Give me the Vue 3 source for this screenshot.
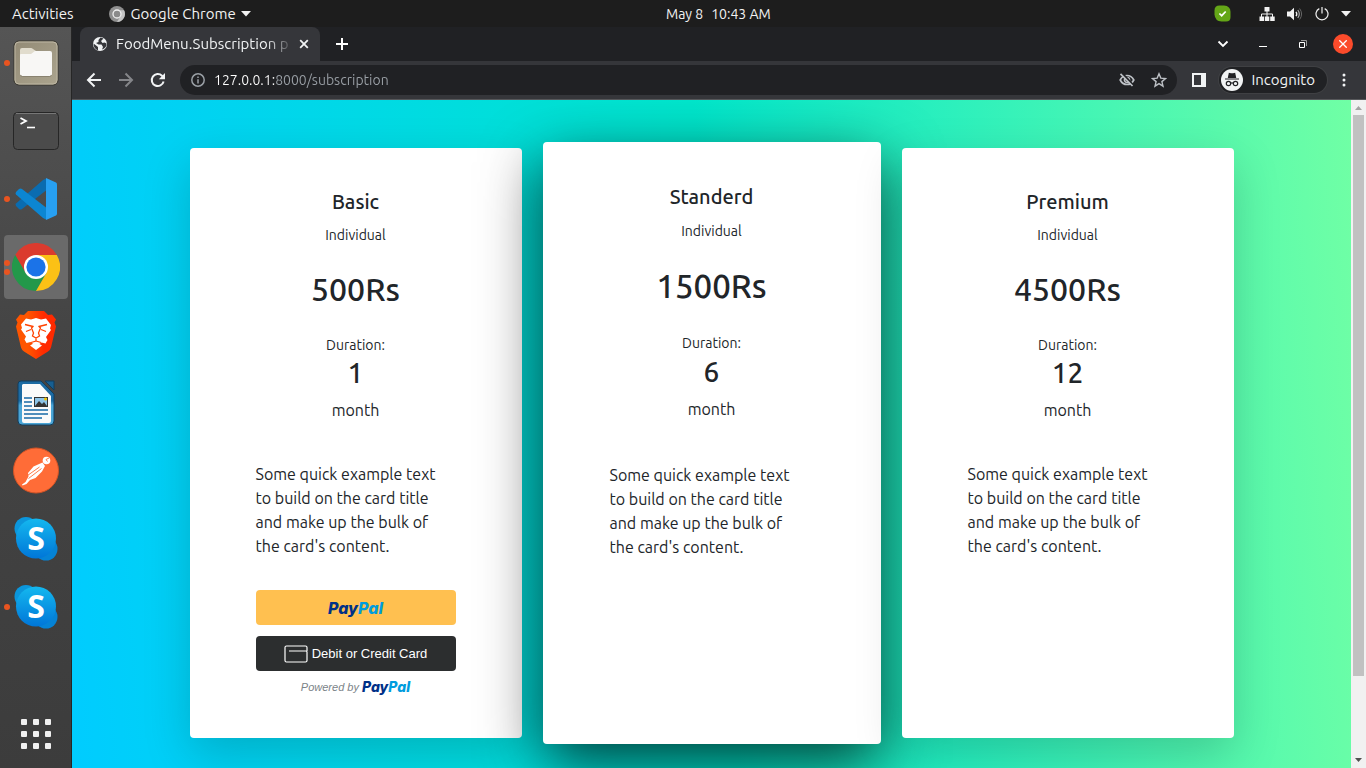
<script setup>
import { ref } from 'vue'

const address = ref('127.0.0.1:8000/subscription')

const plans = [
  { name: 'Basic', price: '500Rs', months: 1, featured: false, pay: true },
  { name: 'Standerd', price: '1500Rs', months: 6, featured: true, pay: false },
  { name: 'Premium', price: '4500Rs', months: 12, featured: false, pay: false }
]

const dock = [
  { id: 'files', label: 'Files', dots: 1 },
  { id: 'terminal', label: 'Terminal', dots: 0 },
  { id: 'code', label: 'Visual Studio Code', dots: 1 },
  { id: 'chrome', label: 'Google Chrome', dots: 2 },
  { id: 'brave', label: 'Brave', dots: 0 },
  { id: 'writer', label: 'LibreOffice Writer', dots: 0 },
  { id: 'postman', label: 'Postman', dots: 0 },
  { id: 'skype', label: 'Skype', dots: 0 },
  { id: 'skype', label: 'Skype', dots: 1 }
]
</script>

<template>
  <div class="desktop">
    <header class="topbar">
      <button class="top-btn activities">Activities</button>
      <button class="top-btn app-menu">
        <svg width="16" height="16" viewBox="0 0 16 16">
          <circle cx="8" cy="8" r="8" fill="#8f8f8f" />
          <path d="M8 4.200h7A8 8 0 0 1 8 16l3.600-6z" fill="#c4c4c4" />
          <circle cx="8" cy="8" r="4" fill="#8a8a8a" stroke="#f0f0f0" stroke-width="1.300" />
        </svg>
        <span>Google Chrome</span>
        <svg width="10" height="6" viewBox="0 0 10 6"><path d="M0 0h10L5 5.500z" fill="#f2f2f2" /></svg>
      </button>
      <button class="top-btn clock"><span>May 8</span><span>10:43 AM</span></button>
      <div class="tray">
        <svg width="17" height="17" viewBox="0 0 17 17">
          <path d="M5.500.5h4.500q6.500.5 6.500 6.500v5q0 4.500-4.500 4.500H7.500Q1 16 .5 9.500v-4q0-5 5-5z" fill="#64a617" />
          <path d="M5.400 8.500l2.300 2.200 4-4.200" fill="none" stroke="#fff" stroke-width="1.700" />
        </svg>
        <svg class="net" width="16" height="14" viewBox="0 0 16 14">
          <path d="M5.500 0h5v4.500h-5zM0.500 9.500h4.500V14H0.500zM5.800 9.500h4.500V14H5.800zM11.200 9.500h4.500V14h-4.500z" fill="#f2f2f2" />
          <path d="M8 4v6M2.500 10V7h11v3" fill="none" stroke="#f2f2f2" />
        </svg>
        <svg width="16" height="14" viewBox="0 0 16 14">
          <path d="M0 4.500h3L7 .8v12.400L3 9.500H0z" fill="#f2f2f2" />
          <path d="M9 4.800q1.600 2.200 0 4.400" fill="none" stroke="#f2f2f2" stroke-width="1.300" />
          <path d="M10.800 3q3 4 0 8" fill="none" stroke="#aaa" stroke-width="1.200" />
          <path d="M12.600 1.500q4 5.500 0 11" fill="none" stroke="#666" />
        </svg>
        <svg width="14" height="14" viewBox="0 0 14 14" fill="none" stroke="#f2f2f2" stroke-width="1.200">
          <path d="M4.300 1.600a6 6 0 1 0 5.400 0M7 0v6.500" />
        </svg>
        <svg width="10" height="6" viewBox="0 0 10 6"><path d="M0 0h10L5 5.500z" fill="#f2f2f2" /></svg>
      </div>
    </header>

    <div class="workspace">
      <nav class="dock" aria-label="Dock">
        <button
          v-for="(app, i) in dock"
          :key="i"
          class="dock-item"
          :class="{ active: app.id === 'chrome' }"
          :aria-label="app.label"
        >
          <span class="dots"><i v-for="n in app.dots" :key="n"></i></span>

          <svg v-if="app.id === 'files'" width="48" height="48" viewBox="0 0 48 48">
            <defs>
              <linearGradient id="filesBg" x1="0" y1="0" x2="1" y2="1">
                <stop offset="0" stop-color="#938b76" /><stop offset="1" stop-color="#aba48e" />
              </linearGradient>
            </defs>
            <rect x="2" y="2" width="44" height="44" rx="5" fill="url(#filesBg)" stroke="#38362f" />
            <rect x="3" y="3" width="42" height="42" rx="4" fill="none" stroke="#bdb6a3" />
            <path d="M8 14v-3q0-2 2-2h9q1 0 2 1l3 2v5H8z" fill="#e1dccd" />
            <path d="M8 16q0-1 1-1h10l4-3h15q2 0 2 2v21q0 2-2 2H10q-2 0-2-2z" fill="#f8f7f5" />
            <path d="M8.500 36q.5 1.500 2 1.500h27q1.500 0 2-1.500" fill="none" stroke="#89826f" />
          </svg>

          <svg v-else-if="app.id === 'terminal'" width="48" height="48" viewBox="0 0 48 48">
            <rect x="1.500" y="5.500" width="45" height="37" rx="4" fill="#4b4b4b" stroke="#262626" />
            <path d="M4 6.500h40" stroke="#777" />
            <path d="M8.500 11l5.500 3-5.500 3" fill="none" stroke="#fff" stroke-width="1.800" />
            <path d="M15 20.500h8" stroke="#fff" stroke-width="1.600" />
          </svg>

          <svg v-else-if="app.id === 'code'" width="48" height="48" viewBox="0 0 48 48">
            <path d="M34 3.500v12L10 34q-1.500 1-3 0l-3-3q-1-1.500 0-2.500L31 5z" fill="#0a6cb0" />
            <path d="M34 44.500v-12L10 14q-1.500-1-3 0l-3 3q-1 1.500 0 2.500L31 43z" fill="#0c86d2" />
            <path d="M34 3l10 4.500q1 .5 1 2v29q0 1.500-1 2L34 45z" fill="#27a0f2" />
          </svg>

          <svg v-else-if="app.id === 'chrome'" width="48" height="48" viewBox="0 0 48 48">
            <path d="M24 12H44.800A24 24 0 0 0 3.200 12L13.600 30z" fill="#db3b2e" />
            <path d="M13.600 30L3.200 12A24 24 0 0 0 24 48L34.400 30z" fill="#23984a" />
            <path d="M34.400 30L24 48A24 24 0 0 0 44.800 12H24z" fill="#fbc116" />
            <circle cx="24" cy="24" r="12" fill="#fff" />
            <circle cx="24" cy="24" r="9.600" fill="#1b73e8" />
          </svg>

          <svg v-else-if="app.id === 'brave'" width="48" height="48" viewBox="0 0 48 48">
            <defs>
              <linearGradient id="braveBg"><stop offset=".3" stop-color="#ff5500" /><stop offset=".7" stop-color="#ff2a00" /></linearGradient>
            </defs>
            <path d="M16 0h16l4 4 4-.5 4 5-1.500 3 1.500 4-5 21q-.5 2-3 4L24 48l-12-7.500q-2.500-2-3-4L4 15.500l1.500-4L4 8.500l4-5 4 .5z" fill="url(#braveBg)" />
            <path d="M14 7.500l5 1 5-1.500 5 1.500 5-1 5 6.500-1 3.500 1 1.500-5 7 1.500 3-2 3.500-4-1-3.500 2.500L24 34l-2-.5-3.500-2.500-4 1-2-3.500L14 25.500l-5-7 1-1.500-1-3.500z" fill="#fff" />
            <path d="M24 31l6 3.500-6 4.500-6-4.500z" fill="#fff" />
            <path d="M13 13.500l8 2M35 13.500l-8 2M21.500 15l-2 2 2 5-1 3 3.500 2 3.500-2-1-3 2-5-2-2M14 20.500l5-2M34 20.500l-5-2M24 27v3l-5 1.500M24 30l5 1.500" fill="none" stroke="#ff4200" stroke-width="1.300" />
          </svg>

          <svg v-else-if="app.id === 'writer'" width="48" height="48" viewBox="0 0 48 48">
            <defs>
              <linearGradient id="writerBg" x1="0" y1="0" x2="0" y2="1"><stop offset=".45" stop-color="#1c6ba3" /><stop offset=".55" stop-color="#4aa5d6" /></linearGradient>
            </defs>
            <path d="M9 2h20l13 13v27q0 4-4 4H10q-4 0-4-4V5q0-3 3-3z" fill="url(#writerBg)" stroke="#123d5c" />
            <path d="M33 2h9v9z" fill="#175f92" stroke="#123d5c" />
            <path d="M11 5h17l11 12v25q0 2-2 2H12q-2 0-2-2V6z" fill="#fafafa" />
            <path d="M12 19h8M12 23h8M12 27h8M12 31h24M12 35h24M12 39h18" stroke="#176aa6" stroke-width="1.700" />
            <rect x="22.500" y="18.500" width="13" height="9" fill="#8cc4e8" stroke="#333" />
            <path d="M23 27l4-5 3 3 2-2 3 4z" fill="#343434" /><circle cx="33.500" cy="20" r="1.500" fill="#f3c300" />
          </svg>

          <svg v-else-if="app.id === 'postman'" width="48" height="48" viewBox="0 0 48 48">
            <circle cx="24" cy="23.500" r="22.500" fill="#ff6c37" stroke="#d45325" />
            <circle cx="34.500" cy="13.500" r="3.800" fill="#fff" />
            <path d="M30.500 15.500l2.500 3.500-3 5.500-6.500 6.500-5.500 2-3.500 4-4 1.500-.5-1 3.500-2.500 3-5.500-.5-3.500 5.500-6.500z" fill="#fff" />
            <path d="M15.500 28.500l12-8.500M16.500 31.500l13-10M34 12.500l3-1.500M34 12.500l1.500 2" stroke="#ff6c37" stroke-width=".9" fill="none" />
          </svg>

          <svg v-else width="48" height="48" viewBox="0 0 48 48">
            <defs>
              <linearGradient id="skypeBg" x1="0" y1="0" x2="0" y2="1"><stop offset="0" stop-color="#14b8ef" /><stop offset="1" stop-color="#0076d8" /></linearGradient>
            </defs>
            <circle cx="14" cy="13.500" r="11.500" fill="#0b96dc" />
            <circle cx="34" cy="34" r="11.500" fill="#0583d6" />
            <circle cx="24" cy="23.500" r="20" fill="url(#skypeBg)" />
            <text x="24" y="35" text-anchor="middle" class="skype-s">S</text>
          </svg>
        </button>

        <button class="apps" aria-label="Show Applications"><i v-for="n in 9" :key="n"></i></button>
      </nav>

      <div class="browser">
        <div class="tabs">
          <div class="tab">
            <svg width="16" height="16" viewBox="0 0 16 16">
              <circle cx="8" cy="8" r="7" fill="#f1f3f4" />
              <path d="M8.500 1.500L6.500 4v2L4 7l2.500 1.500h3L11 11l-1 2.500q5-2 4.500-6l-2-1-2 .5L9 5l2.500-2.500zM1.500 7.500L6 11v3.500Q1.500 12.500 1.500 7.500z" fill="#35363a" />
            </svg>
            <span class="tab-title">FoodMenu.Subscription p</span>
            <button class="icon-btn" aria-label="Close tab">
              <svg width="10" height="10" viewBox="0 0 10 10" stroke="#f1f3f4" stroke-width="1.800"><path d="M1.200 1.200l7.600 7.600M8.800 1.200L1.200 8.800" /></svg>
            </button>
          </div>
          <button class="icon-btn new-tab" aria-label="New tab">
            <svg width="12" height="12" viewBox="0 0 12 12" stroke="#fff" stroke-width="2"><path d="M6 0v12M0 6h12" /></svg>
          </button>
          <div class="window-controls">
            <button class="icon-btn" aria-label="Search tabs">
              <svg width="12" height="8" viewBox="0 0 12 8" fill="none" stroke="#fff" stroke-width="1.800"><path d="M1.500 1.500L6 6l4.500-4.500" /></svg>
            </button>
            <button class="icon-btn" aria-label="Minimize">
              <svg width="8" height="8" viewBox="0 0 8 8"><path d="M0 6.500h8" stroke="#fff" /></svg>
            </button>
            <button class="icon-btn" aria-label="Restore">
              <svg width="8" height="8" viewBox="0 0 8 8" fill="none"><path d="M2 .5h5.500V6" stroke="#999" /><path d="M.5 2.500h5v5h-5z" stroke="#fff" /></svg>
            </button>
            <button class="icon-btn close" aria-label="Close window">
              <svg width="8" height="8" viewBox="0 0 8 8" stroke="#fff" stroke-width="1.300"><path d="M.3.3l7.400 7.400M7.700.3L.3 7.700" /></svg>
            </button>
          </div>
        </div>

        <div class="toolbar">
          <button class="icon-btn" aria-label="Back">
            <svg width="16" height="16" viewBox="0 0 16 16" fill="none" stroke="#f1f3f4" stroke-width="2"><path d="M15 8H2M8.500 1.500L2 8l6.500 6.500" /></svg>
          </button>
          <button class="icon-btn" aria-label="Forward">
            <svg width="16" height="16" viewBox="0 0 16 16" fill="none" stroke="#85868a" stroke-width="2"><path d="M1 8h13M7.500 1.500L14 8l-6.500 6.500" /></svg>
          </button>
          <button class="icon-btn" aria-label="Reload">
            <svg width="16" height="16" viewBox="0 0 16 16"><path d="M13.600 9.500A6 6 0 1 1 12 3.800L14 5.500" fill="none" stroke="#f1f3f4" stroke-width="2" /><path d="M15 1v6.200H8.800z" fill="#f1f3f4" /></svg>
          </button>
          <div class="omnibox">
            <svg width="14" height="14" viewBox="0 0 14 14"><circle cx="7" cy="7" r="6.200" fill="none" stroke="#9aa0a6" stroke-width="1.500" /><path d="M7 6.200V10.500M7 3.500v1.500" stroke="#9aa0a6" stroke-width="1.500" /></svg>
            <input v-model="address" class="address" type="text" aria-label="Address" />
            <button class="icon-btn" aria-label="Third-party cookies blocked">
              <svg width="16" height="14" viewBox="0 0 16 14" fill="none" stroke="#bdc1c6" stroke-width="1.700"><path d="M1.200 7Q3.500 2.500 8 2.500T14.800 7Q12.500 11.500 8 11.500T1.200 7z" /><circle cx="8" cy="7" r="2.500" /><path d="M3 0l12 13" stroke="#202124" stroke-width="2" /><path d="M1.500.8L13.500 13" /></svg>
            </button>
            <button class="icon-btn" aria-label="Bookmark this tab">
              <svg width="16" height="16" viewBox="0 0 16 16" fill="none" stroke="#bdc1c6" stroke-width="1.400"><path d="M8 1.800l1.800 4.300 4.700.4-3.600 3.100 1.100 4.600L8 11.700l-4 2.500 1.100-4.600L1.500 6.500l4.700-.4z" /></svg>
            </button>
          </div>
          <button class="icon-btn side-panel" aria-label="Side panel">
            <svg width="14" height="14" viewBox="0 0 14 14"><path d="M0 0h14v14H0zM2 2v10h7V2z" fill="#f1f3f4" fill-rule="evenodd" /></svg>
          </button>
          <button class="incognito">
            <svg width="22" height="22" viewBox="0 0 22 22">
              <circle cx="11" cy="11" r="11" fill="#f1f3f4" />
              <path d="M7.500 8.500L8.300 4.500l1.500.4h2.400l1.500-.4.800 4zM4 10h14" fill="#202124" stroke="#202124" stroke-width="1.200" />
              <g fill="none" stroke="#202124" stroke-width="1.200"><circle cx="7.500" cy="14.500" r="2.200" /><circle cx="14.500" cy="14.500" r="2.200" /><path d="M9.700 14h2.600" /></g>
            </svg>
            <span>Incognito</span>
          </button>
          <button class="icon-btn" aria-label="Chrome menu">
            <svg width="4" height="14" viewBox="0 0 4 14" fill="#f1f3f4"><circle cx="2" cy="2" r="1.500" /><circle cx="2" cy="7" r="1.500" /><circle cx="2" cy="12" r="1.500" /></svg>
          </button>
        </div>

        <div class="viewport">
          <main class="page">
            <div class="plans">
              <section v-for="plan in plans" :key="plan.name" class="card" :class="{ featured: plan.featured }">
                <h5>{{ plan.name }}</h5>
                <p class="small">Individual</p>
                <h2>{{ plan.price }}</h2>
                <p class="small">Duration:</p>
                <h3>{{ plan.months }}</h3>
                <p class="unit">month</p>
                <p class="text">Some quick example text to build on the card title and make up the bulk of the card's content.</p>
                <div v-if="plan.pay" class="pay">
                  <button class="pay-btn gold" aria-label="PayPal"><span class="paypal"><b>Pay</b><b class="pal">Pal</b></span></button>
                  <button class="pay-btn dark">
                    <svg width="24" height="18" viewBox="0 0 24 18" fill="none" stroke="#fff"><path d="M23 6V2.500Q23 1 21.500 1h-19Q1 1 1 2.500v13Q1 17 2.500 17h19q1.500 0 1.500-1.500V7q0-1-1-1H5" stroke-width="1.200" /></svg>
                    <span>Debit or Credit Card</span>
                  </button>
                  <p class="powered"><span>Powered by</span><span class="paypal mini"><b>Pay</b><b class="pal">Pal</b></span></p>
                </div>
              </section>
            </div>
          </main>
          <div class="scrollbar" aria-hidden="true">
            <svg width="15" height="15" viewBox="0 0 15 15"><path d="M4 10h7L7.500 6z" fill="#a3a3a3" /></svg>
            <div class="track"><div class="thumb"></div></div>
            <svg width="15" height="15" viewBox="0 0 15 15"><path d="M4 5h7L7.500 9z" fill="#505050" /></svg>
          </div>
        </div>
      </div>
    </div>
  </div>
</template>

<style>
body { margin: 0; overflow: hidden; }
</style>

<style scoped>
* { box-sizing: border-box; }
button { border: 0; padding: 0; background: none; color: inherit; font: inherit; cursor: pointer; }
svg { display: block; flex: none; }
h2, h3, h5, p { margin: 0; }

.desktop {
  display: flex; flex-direction: column; height: 100vh; overflow: hidden;
  font-family: Ubuntu, "Noto Sans", "Open Sans", sans-serif; font-size: 15px; color: #212529;
}
.topbar {
  display: grid; grid-template-columns: auto 1fr auto; align-items: center; position: relative;
  height: 27px; flex: none; background: #1d1d1d; color: #f2f2f2;
}
.top-btn { display: flex; align-items: center; }
.activities { padding-left: 12px; }
.app-menu { gap: 6px; margin-left: 35px; justify-self: start; }
.app-menu svg:last-child { margin-left: -1px; }
.clock { position: absolute; left: 50%; top: 0; height: 27px; gap: 8px; margin-left: -17px; font-size: 14px; }
.tray { display: flex; align-items: center; gap: 12px; padding-right: 15px; }
.tray .net { margin-left: 16px; }

.workspace { display: flex; flex: 1; min-height: 0; }
.dock {
  display: flex; flex-direction: column; gap: 4px; width: 72px; flex: none; padding: 4px 4px 2px;
  background: linear-gradient(#555, #454545 40%, #3c3c3c); border-right: 1px solid #262626;
}
.dock-item { position: relative; display: grid; place-items: center; height: 64px; width: 64px; border-radius: 4px; flex: none; }
.dock-item.active { background: #6a6a6a; }
.dots { position: absolute; left: 0; top: 0; bottom: 0; display: flex; flex-direction: column; justify-content: center; gap: 3px; }
.dots i { width: 6px; height: 6px; border-radius: 50%; background: #e95420; }
.skype-s { font: 700 32px "Open Sans", sans-serif; fill: #fff; }
.apps { display: grid; grid-template-columns: repeat(3, 6px); gap: 6px; place-content: center; width: 64px; height: 64px; margin-top: auto; }
.apps i { width: 6px; height: 6px; border-radius: 1px; background: #f0f0f0; }

.browser { display: flex; flex-direction: column; flex: 1; min-width: 0; }
.icon-btn { display: grid; place-items: center; flex: none; }
.tabs { display: flex; align-items: center; height: 34px; padding-left: 8px; background: #202124; color: #f1f3f4; flex: none; }
.tab { display: flex; align-items: center; width: 240px; height: 34px; padding: 0 11px 0 12px; border-radius: 8px 8px 0 0; background: #35363a; }
.tab-title {
  flex: 1; margin: 0 9px 0 8px; padding-bottom: 2px; overflow: hidden; white-space: nowrap;
  mask-image: linear-gradient(to right, #000 150px, transparent 178px);
}
.new-tab { margin-left: 16px; }
.window-controls { display: flex; align-items: center; margin-left: auto; padding-right: 13px; }
.window-controls .icon-btn { width: 20px; height: 20px; margin-left: 20px; }
.window-controls .close { border-radius: 50%; background: #fb4b2b; }

.toolbar { display: flex; align-items: center; gap: 16px; height: 39px; padding: 0 20px 0 14px; background: #35363a; border-bottom: 1px solid #57585b; color: #f1f3f4; flex: none; }
.omnibox { display: flex; align-items: center; flex: 1; height: 30px; margin-left: -2px; padding: 0 10px 0 11px; border-radius: 15px; background: #202124; }
.omnibox .icon-btn { margin-left: 16px; }
.address {
  flex: 1; min-width: 0; margin-left: 9px; padding: 0; border: 0; outline: 0; font: inherit; font-size: 14px; color: transparent;
  background: linear-gradient(to right, #fff 61px, #9aa0a6 61px); background-clip: text; -webkit-background-clip: text;
}
.side-panel { margin-left: -1px; }
.incognito { display: flex; align-items: center; gap: 8px; height: 26px; margin: 0 -1px 0 -3px; padding: 0 12px 0 2px; border-radius: 13px; background: #202124; box-shadow: 0 0 0 1px #3f4043; }
.incognito span { padding-bottom: 2px; }

.viewport { display: flex; flex: 1; min-height: 0; }
.page { flex: 1; min-width: 0; overflow: hidden; padding: 48px 24px 0; background: linear-gradient(86deg, #00ccff, #00e6cc 50%, #70ffa5); }
.plans { display: grid; grid-template-columns: repeat(3, 1fr); gap: 24px; max-width: 1044px; margin: 0 auto; }
.card {
  position: relative; display: flex; flex-direction: column; align-items: center; min-height: 590px; padding: 42px 66px 0;
  border-radius: 4px; background: #fff; box-shadow: 0 16px 48px rgba(0, 0, 0, .18); text-align: center;
}
.featured { margin: -6px -3px; padding: 43px 67px 0; box-shadow: 0 20px 60px rgba(0, 0, 0, .72); }
h5 { font-size: 20px; line-height: 24px; font-weight: 550; }
.small { margin-top: 11px; font-size: 14px; line-height: 21px; }
h2 { margin-top: 24px; font-size: 32px; line-height: 38px; font-weight: 550; }
h2 + .small { margin-top: 27px; }
h3 { font-size: 28px; line-height: 34px; font-weight: 550; }
.unit { margin-top: 8px; font-size: 16px; line-height: 24px; }
.text { width: 100%; margin-top: 40px; padding-right: 8px; font-size: 16px; line-height: 24px; text-align: left; }
.featured .small { margin-top: 12px; }
.featured h2 { margin-top: 25px; font-size: 33px; }
.featured h2 + .small { margin-top: 28px; }
.featured h3 { margin-top: 1px; }
.featured .text { margin-top: 42px; }

.pay { display: flex; flex-direction: column; align-items: center; gap: 11px; width: 100%; margin-top: 32px; font-family: "Liberation Sans", Arial, sans-serif; }
.pay-btn { display: flex; align-items: center; justify-content: center; gap: 4px; width: 100%; height: 35px; border-radius: 4px; }
.gold { background: #ffc050; }
.dark { background: #2c2e2f; color: #fff; font-size: 13px; }
.paypal { font: italic 800 16px/20px Inter, sans-serif; color: #003087; }
.paypal b { font-weight: 800; }
.paypal .pal { color: #009cde; }
.powered { display: flex; align-items: center; gap: 3px; margin-top: -5px; font-size: 11px; line-height: 20px; font-style: italic; color: #7b8388; }
.paypal.mini { font-size: 14px; }

.scrollbar { display: flex; flex-direction: column; width: 15px; background: #f1f1f1; flex: none; }
.track { flex: 1; padding: 0 2px; }
.thumb { height: 88%; background: #c1c1c1; }
</style>
